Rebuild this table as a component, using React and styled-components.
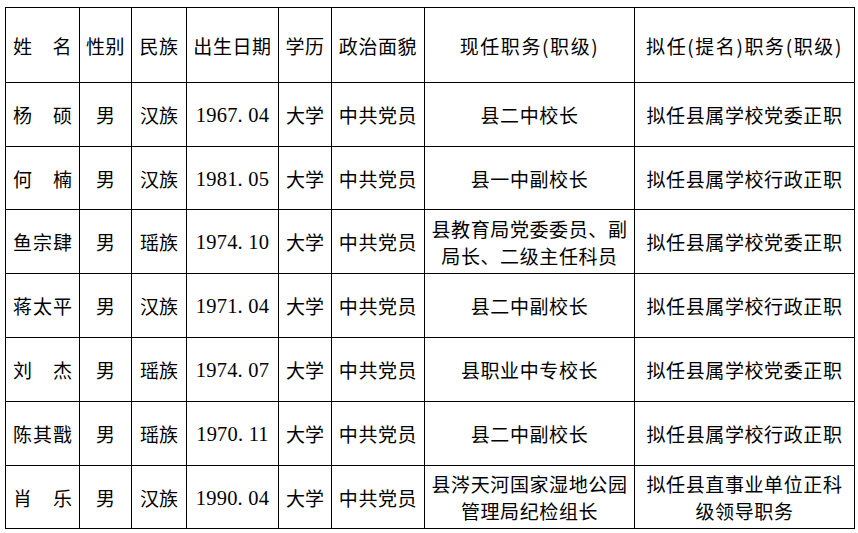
import styled, { createGlobalStyle } from "styled-components";

const GlobalStyle = createGlobalStyle`
    html, body {
        margin: 0;
        padding: 0;
        background: #ffffff;
    }
    body {
        font-family: "Noto Sans CJK SC", "Liberation Serif", sans-serif;
        color: #000;
    }
`;

const Page = styled.div`
    padding: 7px 0 0 5px;
`;

const Table = styled.table`
    border-collapse: collapse;
    table-layout: fixed;
    width: 849px;
    font-size: 19px;
    line-height: 27px;
`;

const Row = styled.tr`
    height: ${(p) => p.$h}px;
`;

const Cell = styled.td`
    border: 1.5px solid #000;
    padding: 0 ${(p) => (p.$justify ? 7 : 2)}px;
    text-align: ${(p) => (p.$justify ? "justify" : "center")};
    text-align-last: ${(p) => (p.$justify ? "justify" : "center")};
    vertical-align: middle;
    white-space: nowrap;
    letter-spacing: ${(p) => p.$ls || 0}px;
`;

const Num = styled.span`
    font-family: "Liberation Serif", serif;
    font-size: 20.5px;
    letter-spacing: 0.2px;
`;

const widths = [74, 52, 55, 92, 53, 93, 210, 220];

const header = ["姓名", "性别", "民族", "出生日期", "学历", "政治面貌", "现任职务(职级)", "拟任(提名)职务(职级)"];

const people = [
    ["杨硕", "汉族", "1967. 04", ["县二中校长"], ["拟任县属学校党委正职"]],
    ["何楠", "汉族", "1981. 05", ["县一中副校长"], ["拟任县属学校行政正职"]],
    ["鱼宗肆", "瑶族", "1974. 10", ["县教育局党委委员、副", "局长、二级主任科员"], ["拟任县属学校党委正职"]],
    ["蒋太平", "汉族", "1971. 04", ["县二中副校长"], ["拟任县属学校行政正职"]],
    ["刘杰", "瑶族", "1974. 07", ["县职业中专校长"], ["拟任县属学校党委正职"]],
    ["陈其戬", "瑶族", "1970. 11", ["县二中副校长"], ["拟任县属学校行政正职"]],
    ["肖乐", "汉族", "1990. 04", ["县涔天河国家湿地公园", "管理局纪检组长"], ["拟任县直事业单位正科", "级领导职务"]],
];

const Lines = ({ lines }) =>
    lines.map((l, i) => (
        <span key={i}>
            {i > 0 && <br />}
            {l}
        </span>
    ));

export default function App() {
    return (
        <Page>
            <GlobalStyle />
            <Table>
                <colgroup>
                    {widths.map((w, i) => (
                        <col key={i} style={{ width: w }} />
                    ))}
                </colgroup>
                <tbody>
                    <Row $h={75}>
                        {header.map((h, i) => (
                            <Cell key={i} $justify={i === 0} $ls={i >= 6 ? 1.6 : 0.6}>
                                {h}
                            </Cell>
                        ))}
                    </Row>
                    {people.map((p, i) => (
                        <Row key={i} $h={i === 1 || i === 6 ? 63 : 64}>
                            <Cell $justify>{p[0]}</Cell>
                            <Cell>男</Cell>
                            <Cell>{p[1]}</Cell>
                            <Cell>
                                <Num>{p[2]}</Num>
                            </Cell>
                            <Cell>大学</Cell>
                            <Cell $ls={0.6}>中共党员</Cell>
                            <Cell $ls={0.6}>
                                <Lines lines={p[3]} />
                            </Cell>
                            <Cell $ls={0.6}>
                                <Lines lines={p[4]} />
                            </Cell>
                        </Row>
                    ))}
                </tbody>
            </Table>
        </Page>
    );
}
